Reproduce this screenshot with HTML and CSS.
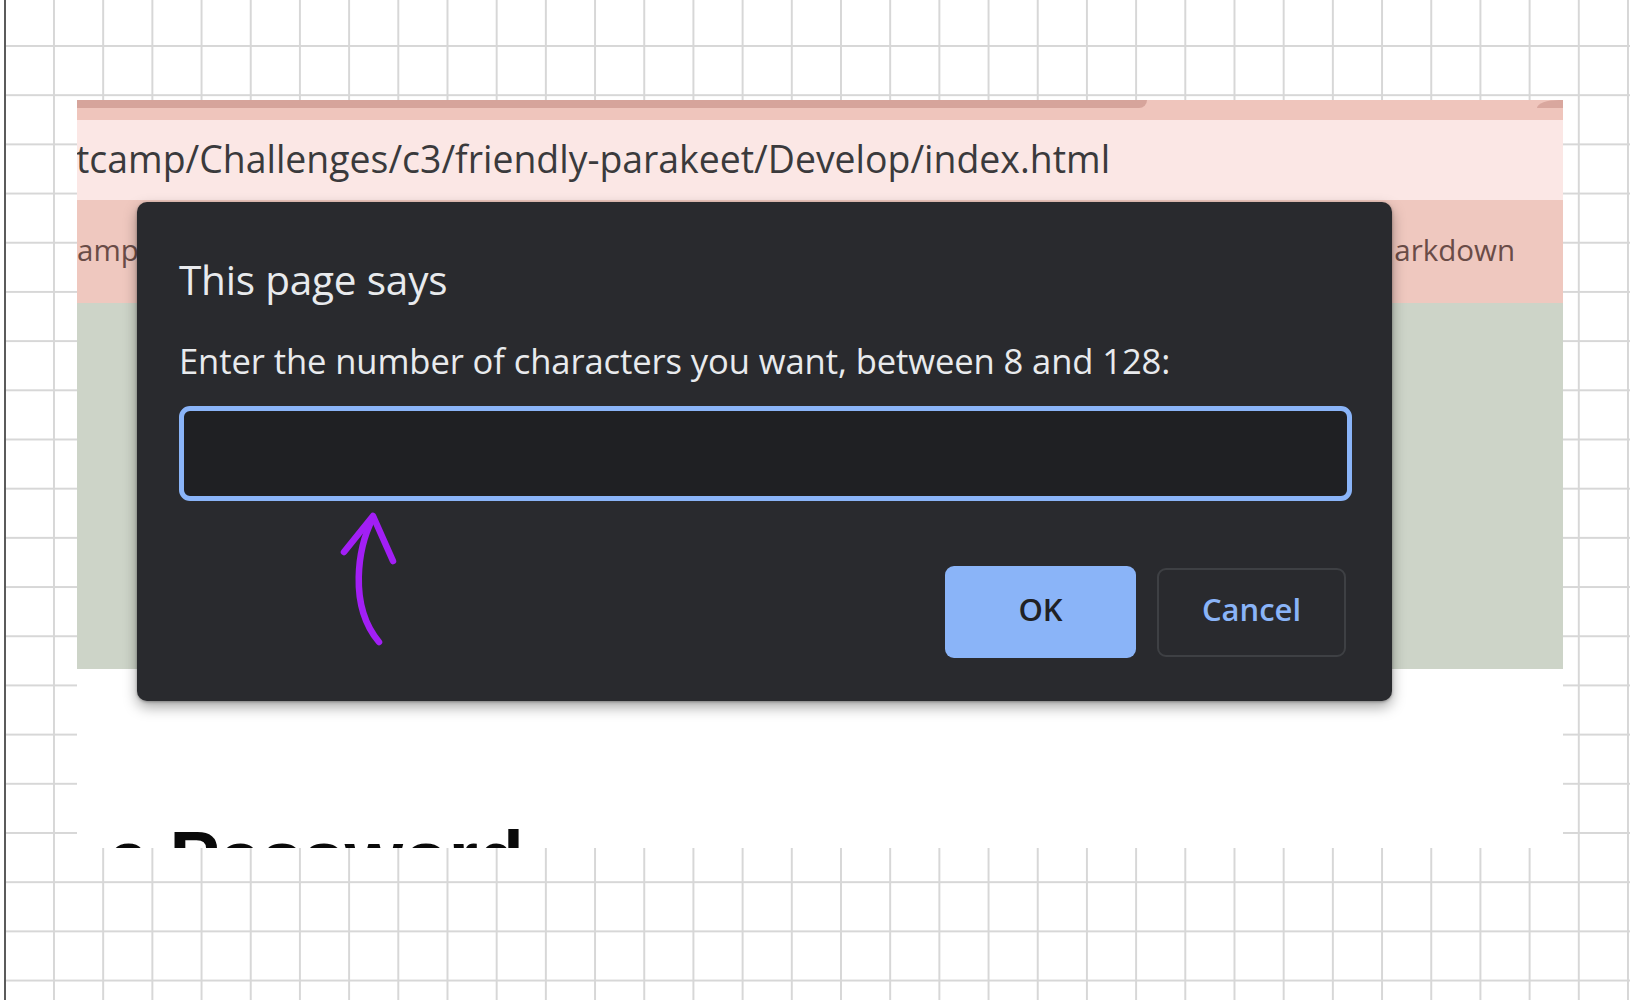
FILE: index.html
```html
<!DOCTYPE html>
<html lang="en">
<head>
<meta charset="utf-8">
<title>This page says</title>
<link rel="stylesheet" href="styles.css">
</head>
<body>
<div class="sheet">
  <div class="shot">
    <div class="tabstrip">
      <div class="tab"></div>
      <div class="tab-edge"></div>
    </div>
    <div class="addr">tcamp/Challenges/c3/friendly-parakeet/Develop/index.html</div>
    <div class="bookmarks">
      <span class="bm">amp</span>
      <span class="bm">arkdown</span>
    </div>
    <div class="page"></div>
    <div class="below">
      <h1 class="heading">e Password</h1>
    </div>

    <div class="dialog">
      <div class="dlg-title">This page says</div>
      <div class="dlg-msg">Enter the number of characters you want, between 8 and 128:</div>
      <div class="dlg-input"></div>
      <div class="dlg-actions">
        <button class="btn btn-ok">OK</button>
        <button class="btn btn-cancel">Cancel</button>
      </div>
    </div>

    <svg class="arrow" width="80" height="150" viewBox="0 0 80 150">
      <path d="M43 13 C 28 42, 18 100, 49 137" fill="none" stroke="#a21ff5" stroke-width="6.5" stroke-linecap="round"/>
      <path d="M14 47 L43 11 L63 56" fill="none" stroke="#a21ff5" stroke-width="6.5" stroke-linecap="round" stroke-linejoin="round"/>
    </svg>
  </div>
</div>
</body>
</html>
```

FILE: styles.css
```css
html, body {
  margin: 0;
  padding: 0;
  background: #ffffff;
}

.sheet {
  margin-left: 4px;
  height: 1000px;
  border-left: 2px solid #5b5b5b;
  background-color: #ffffff;
  background-image:
    linear-gradient(to right, #d7d7d7 2px, transparent 2px),
    linear-gradient(to bottom, #d7d7d7 2px, transparent 2px);
  background-size: 49.2px 49.2px;
  background-position: 47px 45px;
  padding-top: 100px;
  box-sizing: border-box;
  overflow: hidden;
}

.shot {
  position: relative;
  margin-left: 71px;
  width: 1486px;
  display: flex;
  flex-direction: column;
}

.tabstrip {
  height: 20px;
  background: #efc5bc;
  display: flex;
  justify-content: space-between;
  align-items: flex-start;
}

.tab {
  width: 1070px;
  height: 8px;
  background: #d6a49b;
  border-bottom-right-radius: 10px;
}

.tab-edge {
  width: 26px;
  height: 8px;
  background: #d9a79e;
  border-top-left-radius: 22px 8px;
}

.addr {
  height: 80px;
  background: #fbe7e5;
  font-family: "Open Sans", "Noto Sans", sans-serif;
  font-size: 37.4px;
  line-height: 78px;
  color: #3a3a3c;
  white-space: nowrap;
  overflow: hidden;
  text-indent: -1px;
}

.bookmarks {
  height: 103px;
  background: #efc8bf;
  display: flex;
  justify-content: space-between;
  align-items: center;
  padding-right: 48px;
  font-family: "Open Sans", "Noto Sans", sans-serif;
  font-size: 29.5px;
  color: #6a4c47;
}

.bm {
  line-height: 30px;
  margin-top: -4px;
}

.page {
  height: 366px;
  background: #cdd4c8;
}

.below {
  height: 179px;
  background: #ffffff;
  overflow: hidden;
  padding: 151px 0 0 30px;
  box-sizing: border-box;
}

.heading {
  margin: 0;
  font-family: "Liberation Sans", Arial, sans-serif;
  font-weight: 700;
  font-size: 75px;
  line-height: 75px;
  color: #0a0a0a;
}

.dialog {
  position: absolute;
  left: 60px;
  top: 102px;
  width: 1255px;
  height: 499px;
  box-sizing: border-box;
  background: #292a2e;
  border-radius: 10px;
  box-shadow: 0 6px 14px rgba(0, 0, 0, 0.35), 0 1px 3px rgba(0, 0, 0, 0.3);
  padding: 53px 40px 0 42px;
  font-family: "Open Sans", "Noto Sans", sans-serif;
  color: #e8eaed;
}

.dlg-title {
  font-size: 40.5px;
  line-height: 50px;
  letter-spacing: -0.2px;
}

.dlg-msg {
  margin-top: 35px;
  font-size: 34.6px;
  line-height: 42px;
  letter-spacing: -0.1px;
}

.dlg-input {
  margin-top: 24px;
  width: 1173px;
  height: 95px;
  box-sizing: border-box;
  border: 5px solid #8ab4f8;
  border-radius: 11px;
  background: #1f2023;
}

.dlg-actions {
  margin-top: 65px;
  padding-right: 6px;
  display: flex;
  justify-content: flex-end;
  align-items: center;
  gap: 21px;
}

.btn {
  box-sizing: border-box;
  border-radius: 9px;
  font-family: "Open Sans", "Noto Sans", sans-serif;
  font-size: 31px;
  font-weight: 600;
  line-height: 1;
  padding: 0 0 6px;
  cursor: pointer;
}

.btn-ok {
  width: 191px;
  height: 92px;
  background: #8ab4f8;
  color: #202124;
  border: none;
}

.btn-cancel {
  width: 189px;
  height: 89px;
  background: transparent;
  color: #8ab4f8;
  border: 2px solid #3e4044;
}

.arrow {
  position: absolute;
  left: 253px;
  top: 405px;
}
```
